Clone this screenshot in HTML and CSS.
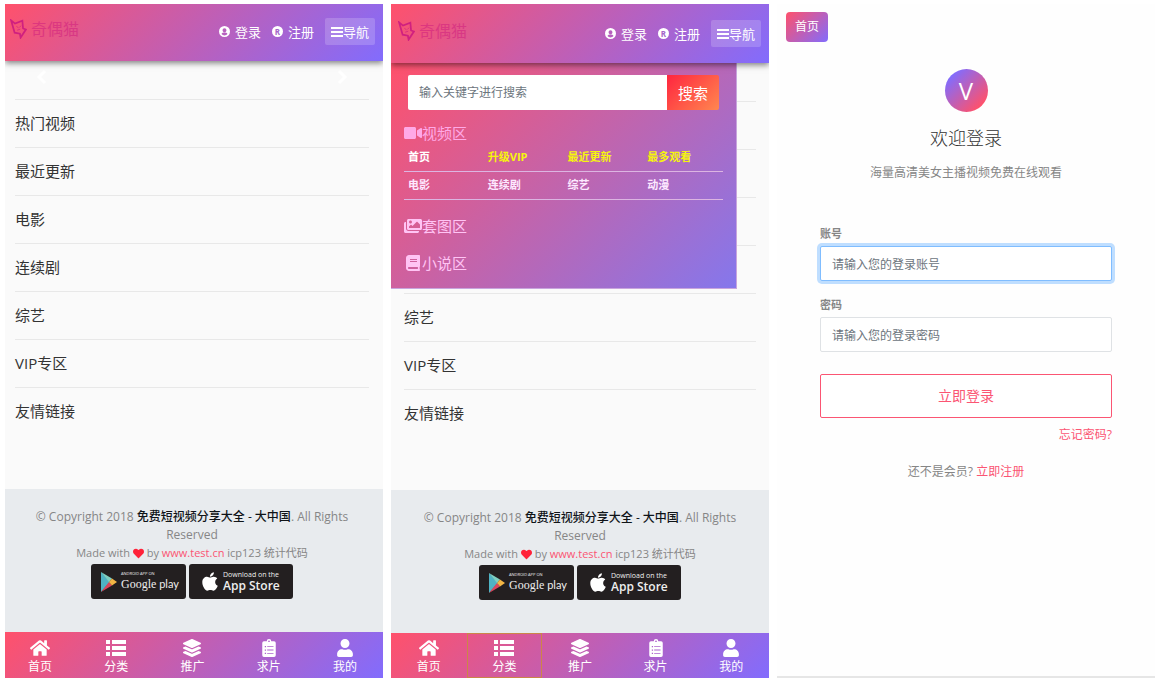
FILE: index.html
```html
<!DOCTYPE html>
<html lang="zh-CN">
<head>
<meta charset="utf-8">
<title>免费短视频分享大全</title>
<link rel="stylesheet" href="styles.css">
</head>
<body>
<svg class="sprite" aria-hidden="true">
  <symbol id="fox" viewBox="0 0 48 57"><path d="M3 4L14 13L35 5L37 27L45 30L30 53L28 42L13 39Z" fill="none" stroke="currentColor" stroke-width="5"/><path d="M18 21l6 4M31 19l-4 5M20 32l9-3" stroke="currentColor" stroke-width="2"/></symbol>
  <symbol id="account" viewBox="0 0 20 20"><path fill-rule="evenodd" fill="currentColor" d="M10 0a10 10 0 1 1 0 20a10 10 0 0 1 0-20zM10 4a3.600 3.600 0 1 0 0 7.200a3.600 3.600 0 0 0 0-7.200zM4.500 14.500a7 7 0 0 0 11 0c-1-1.800-3-2.600-5.500-2.600s-4.500.8-5.500 2.600z"/></symbol>
  <symbol id="bars" viewBox="0 0 12 12"><path d="M0 2h12M0 6h12M0 10h12" stroke="currentColor" stroke-width="2"/></symbol>
  <symbol id="left" viewBox="0 0 10 16"><path d="M8 2L2 8l6 6" fill="none" stroke="currentColor" stroke-width="3"/></symbol>
  <symbol id="right" viewBox="0 0 10 16"><path d="M2 2l6 6-6 6" fill="none" stroke="currentColor" stroke-width="3"/></symbol>
  <symbol id="home" viewBox="0 0 576 512"><path fill="currentColor" d="M280.37 148.26L96 300.11V464a16 16 0 0 0 16 16l112.06-.29a16 16 0 0 0 15.92-16V368a16 16 0 0 1 16-16h64a16 16 0 0 1 16 16v95.64a16 16 0 0 0 16 16.05L464 480a16 16 0 0 0 16-16V300L295.67 148.26a12.19 12.19 0 0 0-15.3 0zM571.6 251.47L488 182.56V44.05a12 12 0 0 0-12-12h-56a12 12 0 0 0-12 12v72.61L318.47 43a48 48 0 0 0-61 0L4.34 251.47a12 12 0 0 0-1.6 16.9l25.5 31A12 12 0 0 0 45.15 301l235.22-193.74a12.19 12.19 0 0 1 15.3 0L530.9 301a12 12 0 0 0 16.9-1.6l25.5-31a12 12 0 0 0-1.7-16.93z"/></symbol>
  <symbol id="list" viewBox="0 0 20 18"><path fill="currentColor" d="M0 1h4v4H0zM6 1h14v4H6zM0 7h4v4H0zM6 7h14v4H6zM0 13h4v4H0zM6 13h14v4H6z"/></symbol>
  <symbol id="layers" viewBox="0 0 512 512"><path fill="currentColor" d="M12.41 148.02l232.94 105.67c6.8 3.09 14.49 3.09 21.29 0l232.94-105.67c16.55-7.51 16.55-32.52 0-40.03L266.65 2.31a25.607 25.607 0 0 0-21.29 0L12.41 107.98c-16.55 7.51-16.55 32.53 0 40.04zm487.18 88.28l-58.09-26.33-161.64 73.27c-7.56 3.43-15.59 5.17-23.86 5.17s-16.29-1.74-23.86-5.17L70.51 209.97l-58.1 26.33c-16.55 7.5-16.55 32.5 0 40l232.94 105.59c6.8 3.08 14.49 3.08 21.29 0L499.59 276.3c16.55-7.5 16.55-32.5 0-40zm0 127.8l-57.87-26.23-161.86 73.37c-7.56 3.43-15.59 5.17-23.86 5.17s-16.29-1.74-23.86-5.17L70.29 337.87 12.41 364.1c-16.55 7.5-16.55 32.5 0 40l232.94 105.59c6.8 3.08 14.49 3.08 21.29 0L499.59 404.1c16.55-7.5 16.55-32.5 0-40z"/></symbol>
  <symbol id="clip" viewBox="0 0 384 512"><path fill="currentColor" fill-rule="evenodd" d="M48 64h80a64 64 0 0 1 128 0h80a48 48 0 0 1 48 48v352a48 48 0 0 1-48 48H48a48 48 0 0 1-48-48V112a48 48 0 0 1 48-48zM192 40a24 24 0 1 0 0 48a24 24 0 0 0 0-48zM72 200v36h36v-36zM140 206v24h180v-24zM72 296v36h36v-36zM140 302v24h180v-24zM72 392v36h36v-36zM140 398v24h180v-24z"/></symbol>
  <symbol id="user" viewBox="0 0 448 512"><path fill="currentColor" d="M224 256c70.700 0 128-57.300 128-128S294.700 0 224 0 96 57.300 96 128s57.300 128 128 128zm89.600 32h-16.700c-22.200 10.200-46.900 16-72.900 16s-50.600-5.800-72.900-16h-16.700C60.200 288 0 348.200 0 422.400V464c0 26.500 21.500 48 48 48h352c26.500 0 48-21.500 48-48v-41.600c0-74.200-60.200-134.400-134.400-134.400z"/></symbol>
  <symbol id="heart" viewBox="0 0 512 512"><path fill="currentColor" d="M462.3 62.6C407.5 15.9 326 24.3 275.7 76.2L256 96.5l-19.7-20.3C186.100 24.300 104.500 15.900 49.700 62.600c-62.800 53.600-66.100 149.800-9.900 207.900l193.500 199.800c12.500 12.900 32.800 12.900 45.300 0l193.500-199.800c56.300-58.100 53-154.300-9.800-207.900z"/></symbol>
  <symbol id="video" viewBox="0 0 576 512"><path fill="currentColor" d="M336.200 64H47.800C21.400 64 0 85.400 0 111.800v288.400C0 426.600 21.400 448 47.800 448h288.400c26.400 0 47.800-21.400 47.800-47.800V111.800c0-26.400-21.400-47.800-47.800-47.800zm189.400 37.700L416 177.300v157.400l109.600 75.500c21.200 14.600 50.400-.3 50.400-25.800V127.500c0-25.400-29.100-40.400-50.400-25.800z"/></symbol>
  <symbol id="images" viewBox="0 0 576 512"><path fill="currentColor" d="M480 416v16c0 26.510-21.490 48-48 48H48c-26.510 0-48-21.490-48-48V176c0-26.510 21.490-48 48-48h16v208c0 44.112 35.888 80 80 80h336zm96-80V80c0-26.510-21.490-48-48-48H144c-26.510 0-48 21.490-48 48v256c0 26.510 21.490 48 48 48h384c26.510 0 48-21.490 48-48zM256 128c0 26.510-21.490 48-48 48s-48-21.490-48-48 21.490-48 48-48 48 21.490 48 48zm-96 144l55.515-55.515c4.686-4.686 12.284-4.686 16.971 0L272 256l135.515-135.515c4.686-4.686 12.284-4.686 16.971 0L512 208v112H160v-48z"/></symbol>
  <symbol id="book" viewBox="0 0 448 512"><path fill="currentColor" d="M448 360V24c0-13.300-10.700-24-24-24H96C43 0 0 43 0 96v320c0 53 43 96 96 96h328c13.300 0 24-10.700 24-24v-16c0-7.500-3.500-14.300-8.900-18.700-4.200-15.400-4.200-59.300 0-74.700 5.400-4.300 8.900-11.100 8.900-18.600zM128 134c0-3.300 2.700-6 6-6h212c3.300 0 6 2.700 6 6v20c0 3.300-2.700 6-6 6H134c-3.300 0-6-2.700-6-6v-20zm0 64c0-3.300 2.700-6 6-6h212c3.300 0 6 2.700 6 6v20c0 3.300-2.700 6-6 6H134c-3.300 0-6-2.700-6-6v-20zm253.400 250H96c-17.700 0-32-14.300-32-32 0-17.600 14.400-32 32-32h285.400c-1.900 17.100-1.900 46.900 0 64z"/></symbol>
  <symbol id="play" viewBox="0 0 16 20"><path d="M0 0v20L9 10z" fill="#4fb3c4"/><path d="M0 0l11 6.500L8 10z" fill="#7fcfc0"/><path d="M0 20l11-6.500L8 10z" fill="#d9475c"/><path d="M11 6.500L16 10l-5 3.500L8 10z" fill="#f3b544"/></symbol>
  <symbol id="apple" viewBox="0 0 384 512"><path fill="currentColor" d="M318.700 268.700c-.2-36.700 16.400-64.400 50-84.800-18.800-26.900-47.200-41.700-84.700-44.600-35.500-2.800-74.300 20.700-88.500 20.700-15 0-49.400-19.700-76.400-19.700C63.300 141.200 4 184.800 4 273.500q0 39.300 14.400 81.200c12.800 36.700 59 126.700 107.200 125.200 25.200-.6 43-17.900 75.800-17.900 31.800 0 48.300 17.900 76.400 17.900 48.600-.7 90.400-82.500 102.600-119.300-65.200-30.700-61.700-90-61.700-91.900zm-56.600-164.200c27.300-32.400 24.800-61.900 24-72.500-24.100 1.400-52 16.400-67.900 34.900-17.500 19.800-27.800 44.300-25.600 71.900 26.100 2 49.900-11.400 69.500-34.300z"/></symbol>
</svg>

<div class="screens">
  <section class="screen screen-home">
    <header class="topbar">
      <a class="brand" href="#"><svg class="brand-mark"><use href="#fox"/></svg><span>奇偶猫</span></a>
      <div class="account">
        <a href="#"><svg class="i10"><use href="#account"/></svg>登录</a>
        <a href="#"><span class="reg">R</span>注册</a>
        <button class="toggle" type="button"><svg class="i12"><use href="#bars"/></svg>导航</button>
      </div>
    </header>
    <main class="content">
      <div class="slider"><svg class="arrow"><use href="#left"/></svg><svg class="arrow"><use href="#right"/></svg></div>
      <ul class="sections">
        <li>热门视频</li><li>最近更新</li><li>电影</li><li>连续剧</li><li>综艺</li><li>VIP专区</li><li>友情链接</li>
      </ul>
    </main>
    <footer class="footer">
      <p class="copy">© Copyright 2018 <strong>免费短视频分享大全 - 大中国</strong>. All Rights Reserved</p>
      <p class="made">Made with <svg class="heart"><use href="#heart"/></svg> by <a href="#">www.test.cn</a> icp123 统计代码</p>
      <div class="stores">
        <a class="store google" href="#"><svg class="play"><use href="#play"/></svg><span class="store-text"><small>ANDROID APP ON</small><span class="gp"><span class="goog">Google</span> play</span></span></a>
        <a class="store ios" href="#"><svg class="apple"><use href="#apple"/></svg><span class="store-text"><small>Download on the</small><b>App Store</b></span></a>
      </div>
    </footer>
    <nav class="tabs">
      <div class="tab-row">
        <a href="#"><svg class="tab-icon"><use href="#home"/></svg>首页</a>
        <a href="#"><svg class="tab-icon"><use href="#list"/></svg>分类</a>
        <a href="#"><svg class="tab-icon"><use href="#layers"/></svg>推广</a>
        <a href="#"><svg class="tab-icon"><use href="#clip"/></svg>求片</a>
        <a href="#"><svg class="tab-icon"><use href="#user"/></svg>我的</a>
      </div>
    </nav>
  </section>

  <section class="screen screen-menu">
    <header class="topbar">
      <a class="brand" href="#"><svg class="brand-mark"><use href="#fox"/></svg><span>奇偶猫</span></a>
      <div class="account">
        <a href="#"><svg class="i10"><use href="#account"/></svg>登录</a>
        <a href="#"><span class="reg">R</span>注册</a>
        <button class="toggle" type="button"><svg class="i12"><use href="#bars"/></svg>导航</button>
      </div>
    </header>
    <main class="content">
      <div class="slider"></div>
      <ul class="sections">
        <li>热门视频</li><li>最近更新</li><li>电影</li><li>连续剧</li><li>综艺</li><li>VIP专区</li><li>友情链接</li>
      </ul>
      <div class="menu">
        <form class="search">
          <input type="text" placeholder="输入关键字进行搜索" aria-label="搜索关键字">
          <button type="button">搜索</button>
        </form>
        <h2 class="zone zone-video"><svg class="zone-icon"><use href="#video"/></svg>视频区</h2>
        <table class="links">
          <tr class="top"><td>首页</td><td class="hot">升级VIP</td><td class="hot">最近更新</td><td class="hot">最多观看</td></tr>
          <tr><td>电影</td><td>连续剧</td><td>综艺</td><td>动漫</td></tr>
        </table>
        <h2 class="zone"><svg class="zone-icon"><use href="#images"/></svg>套图区</h2>
        <h2 class="zone"><svg class="zone-icon"><use href="#book"/></svg>小说区</h2>
      </div>
    </main>
    <footer class="footer">
      <p class="copy">© Copyright 2018 <strong>免费短视频分享大全 - 大中国</strong>. All Rights Reserved</p>
      <p class="made">Made with <svg class="heart"><use href="#heart"/></svg> by <a href="#">www.test.cn</a> icp123 统计代码</p>
      <div class="stores">
        <a class="store google" href="#"><svg class="play"><use href="#play"/></svg><span class="store-text"><small>ANDROID APP ON</small><span class="gp"><span class="goog">Google</span> play</span></span></a>
        <a class="store ios" href="#"><svg class="apple"><use href="#apple"/></svg><span class="store-text"><small>Download on the</small><b>App Store</b></span></a>
      </div>
    </footer>
    <nav class="tabs">
      <div class="tab-row">
        <a href="#"><svg class="tab-icon"><use href="#home"/></svg>首页</a>
        <a class="focused" href="#"><svg class="tab-icon"><use href="#list"/></svg>分类</a>
        <a href="#"><svg class="tab-icon"><use href="#layers"/></svg>推广</a>
        <a href="#"><svg class="tab-icon"><use href="#clip"/></svg>求片</a>
        <a href="#"><svg class="tab-icon"><use href="#user"/></svg>我的</a>
      </div>
    </nav>
  </section>

  <section class="screen screen-login">
    <a class="back" href="#">首页</a>
    <div class="badge">V</div>
    <h1 class="title">欢迎登录</h1>
    <p class="lead">海量高清美女主播视频免费在线观看</p>
    <form class="login">
      <label for="acc">账号</label>
      <input class="active" id="acc" type="text" placeholder="请输入您的登录账号">
      <label for="pwd">密码</label>
      <input id="pwd" type="password" placeholder="请输入您的登录密码">
      <button type="button">立即登录</button>
      <a class="forgot" href="#">忘记密码?</a>
      <p class="join">还不是会员? <a href="#">立即注册</a></p>
    </form>
  </section>
</div>
</body>
</html>
```
FILE: styles.css
```css
* { box-sizing: border-box; }

:root {
  --brand: linear-gradient(135deg, #ff516b, #826cfd);
  --red: #fb5573;
}

body {
  margin: 0;
  background: #fff;
  color: #333;
  font: 12px/18px "Open Sans", "Noto Sans CJK SC", sans-serif;
}

a { color: inherit; text-decoration: none; }
p, h1, h2, ul { margin: 0; padding: 0; }
svg { flex: none; }
input, button { font: inherit; }
.sprite { display: none; }

.screens {
  display: grid;
  grid-template-columns: repeat(3, minmax(0, 1fr));
  gap: 8px;
  min-height: 100vh;
  padding: 4px 7px 4px 5px;
}

.screen { display: flex; flex-direction: column; overflow: hidden; }
.screen-home, .screen-menu { background: #fafafa; }

/* header */
.topbar {
  position: relative;
  z-index: 2;
  display: flex;
  justify-content: space-between;
  align-items: flex-start;
  padding: 14px 8px 16px 5px;
  background: var(--brand);
  box-shadow: 0 2px 6px rgba(0, 0, 0, .5);
}
.screen-menu .topbar { padding: 16px 8px 16px 7px; }
.brand { display: flex; align-items: center; gap: 4px; color: #d0207f; font-size: 16px; line-height: 22px; }
.brand span { opacity: .55; }
.brand-mark { width: 17px; height: 20px; }
.account { display: flex; align-items: center; gap: 11px; color: #fff; font-size: 13px; }
.account a { display: flex; align-items: center; gap: 5px; }
.i10 { width: 11px; height: 11px; }
.i12 { width: 12px; height: 12px; }
.reg {
  width: 11px;
  height: 11px;
  border-radius: 50%;
  background: #fff;
  color: #a465c9;
  font-size: 8px;
  font-weight: 700;
  line-height: 11px;
  text-align: center;
}
.toggle {
  display: flex;
  align-items: center;
  height: 27px;
  padding: 0 6px;
  border: 0;
  border-radius: 2px;
  background: rgba(255, 255, 255, .18);
  color: #fff;
}

/* section list */
.content { position: relative; flex: 1; padding: 0 14px 0 10px; }
.screen-menu .content { padding: 0 13px; }
.slider { display: flex; justify-content: space-between; height: 38px; padding: 8px 22px; color: #fff; }
.arrow { width: 10px; height: 16px; }
.sections { list-style: none; font-size: 15px; }
.sections li { height: 48px; border-top: 1px solid #e8e8e8; line-height: 47px; }

/* drop-down menu */
.menu {
  position: absolute;
  top: 0;
  left: 0;
  right: 32px;
  padding: 12px 13px 14px;
  border: solid #c8a5dd;
  border-width: 0 1px 1px 0;
  background: linear-gradient(135deg, #ff516b, #8577ec);
}
.search { display: flex; height: 35px; margin: 0 4px 12px; }
.search input {
  flex: 1;
  min-width: 0;
  padding: 0 11px;
  border: 0;
  border-radius: 2px 0 0 2px;
  background: #fff;
}
.search button {
  width: 52px;
  padding: 0;
  border: 0;
  border-radius: 0 2px 2px 0;
  background: linear-gradient(135deg, #ff253f, #ff874f);
  color: #fff;
  font-size: 15px;
}
::placeholder { color: #6c757d; opacity: 1; }
.zone { display: flex; align-items: center; margin-top: 15px; color: #ffc4f4; font-size: 15px; font-weight: 400; line-height: 22px; }
.zone-video { margin: 0 0 -1px; color: #ffa9e6; }
.zone-icon { width: 18px; height: 16px; }
.links { width: 100%; border-collapse: collapse; table-layout: fixed; color: #fde8ff; font-size: 11px; font-weight: 700; }
.links td { height: 28px; padding: 0 4px; border-bottom: 1px solid #dcb5e2; }
.links .top { color: #fff; }
.links .hot { color: #f6f50c; }

/* footer */
.footer { padding: 19px 20px 33px; background: #e8ebee; color: #868686; text-align: center; }
.screen-home .footer { padding-right: 24px; }
.copy strong { color: #101418; font-weight: 500; }
.made { font-size: 11px; line-height: 17px; }
.made a, .forgot, .join a { color: var(--red); }
.heart { width: 11px; height: 11px; color: #ff2239; vertical-align: -2px; }
.stores { display: flex; justify-content: center; gap: 3px; margin-top: 3px; }
.store { display: flex; align-items: center; height: 35px; border-radius: 3px; background: #231f20; color: #eee; text-align: left; }
.google { width: 95px; padding-left: 10px; gap: 4px; }
.ios { width: 104px; padding-left: 13px; gap: 5px; }
.play { width: 16px; height: 20px; }
.apple { width: 16px; height: 21px; color: #fff; }
.store-text { display: flex; flex-direction: column; }
.store-text small { font-size: 6px; line-height: 7px; white-space: nowrap; }
.google small { font-size: 4px; line-height: 5px; }
.ios small { font-size: 7px; }
.store-text b { font: 600 12px/15px "Open Sans", sans-serif; white-space: nowrap; }
.gp { font: 11px/15px Lato, sans-serif; white-space: nowrap; }
.goog { font: 12px/15px "Liberation Serif", serif; }

/* bottom tabs */
.tabs { background: var(--brand); color: #fff; }
.tab-row { display: grid; grid-template-columns: repeat(5, 1fr); }
.screen-home .tab-row { margin-left: -3px; }
.tab-row a { display: flex; flex-direction: column; align-items: center; gap: 1px; height: 46px; padding-top: 7px; }
.screen-menu .tab-row a { height: 45px; padding-top: 6px; }
.tab-row .focused { outline: 1px solid #cc8548; outline-offset: -1px; }
.tab-icon { width: 20px; height: 18px; }

/* login */
.screen-login { padding: 8px 9px 0; border-bottom: 2px solid #e6e6e6; background: #fefefe; align-items: center; }
.back {
  align-self: flex-start;
  padding: 0 9px;
  border-radius: 4px;
  background: var(--brand);
  color: #fff;
  line-height: 30px;
}
.badge {
  width: 43px;
  margin-top: 27px;
  border-radius: 50%;
  background: linear-gradient(135deg, #826cfd 15%, #ff516b 85%);
  color: #fff;
  font: 500 24px/43px "Open Sans", sans-serif;
  text-align: center;
}
.title { margin-top: 14px; font-size: 18px; font-weight: 300; line-height: 24px; }
.lead { margin-top: 15px; color: #868686; line-height: 16px; }
.login { display: flex; flex-direction: column; align-self: stretch; margin: 45px 34px 0; line-height: 16px; }
.login label { margin-bottom: 4px; color: #868686; font-size: 11px; font-weight: 700; }
.login input {
  height: 35px;
  margin-bottom: 16px;
  padding: 2px 11px 0;
  border: 1px solid #dfe2e5;
  border-radius: 2px;
  background: #fff;
}
.login .active { border-color: #80bdff; box-shadow: 0 0 0 3px #bfdeff; outline: 0; }
.login button {
  height: 44px;
  margin-top: 6px;
  border: 1px solid var(--red);
  border-radius: 2px;
  background: #fff;
  color: var(--red);
  font-size: 14px;
}
.forgot { align-self: flex-end; margin-top: 9px; }
.join { margin-top: 21px; color: #868686; text-align: center; }
```
